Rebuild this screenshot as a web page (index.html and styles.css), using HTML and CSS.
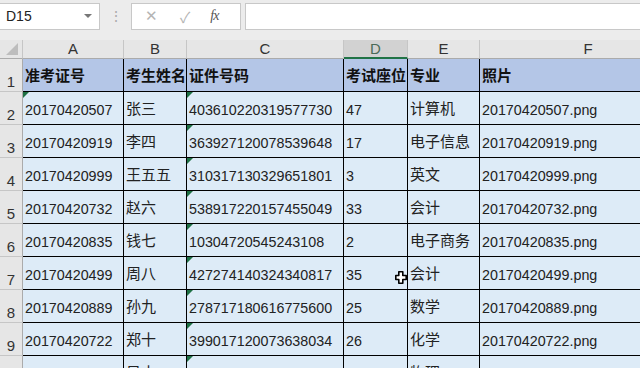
FILE: index.html
```html
<!DOCTYPE html>
<html lang="zh-CN">
<head>
    <meta charset="UTF-8">
    <title>考试信息表</title>
    <link rel="stylesheet" href="styles.css">
</head>
<body>
    <!-- formula bar -->
    <div class="formula-bar">
        <div class="name-box">
            <span>D15</span>
            <span class="drop-arrow"></span>
        </div>
        <div class="grip">⋮</div>
        <div class="fx-box">
            <span class="fx-cancel">✕</span>
            <span class="fx-ok">✓</span>
            <span class="fx-label">fx</span>
        </div>
        <div class="formula-input"></div>
    </div>

    <!-- worksheet -->
    <div class="sheet">
        <div class="corner"><span class="corner-mark"></span></div>
        <div class="col-head">A</div>
        <div class="col-head">B</div>
        <div class="col-head">C</div>
        <div class="col-head selected">D</div>
        <div class="col-head">E</div>
        <div class="col-head">F</div>

        <div class="row-head">1</div>
        <div class="cell title">准考证号</div>
        <div class="cell title">考生姓名</div>
        <div class="cell title">证件号码</div>
        <div class="cell title">考试座位</div>
        <div class="cell title">专业</div>
        <div class="cell title">照片</div>

        <div class="row-head">2</div>
        <div class="cell flag">20170420507</div>
        <div class="cell zh">张三</div>
        <div class="cell flag">403610220319577730</div>
        <div class="cell">47</div>
        <div class="cell zh">计算机</div>
        <div class="cell">20170420507.png</div>

        <div class="row-head">3</div>
        <div class="cell">20170420919</div>
        <div class="cell zh">李四</div>
        <div class="cell flag">363927120078539648</div>
        <div class="cell">17</div>
        <div class="cell zh">电子信息</div>
        <div class="cell">20170420919.png</div>

        <div class="row-head">4</div>
        <div class="cell">20170420999</div>
        <div class="cell zh">王五五</div>
        <div class="cell flag">310317130329651801</div>
        <div class="cell">3</div>
        <div class="cell zh">英文</div>
        <div class="cell">20170420999.png</div>

        <div class="row-head">5</div>
        <div class="cell">20170420732</div>
        <div class="cell zh">赵六</div>
        <div class="cell flag">538917220157455049</div>
        <div class="cell">33</div>
        <div class="cell zh">会计</div>
        <div class="cell">20170420732.png</div>

        <div class="row-head">6</div>
        <div class="cell">20170420835</div>
        <div class="cell zh">钱七</div>
        <div class="cell flag">10304720545243108</div>
        <div class="cell">2</div>
        <div class="cell zh">电子商务</div>
        <div class="cell">20170420835.png</div>

        <div class="row-head">7</div>
        <div class="cell">20170420499</div>
        <div class="cell zh">周八</div>
        <div class="cell flag">427274140324340817</div>
        <div class="cell">35</div>
        <div class="cell zh">会计</div>
        <div class="cell">20170420499.png</div>

        <div class="row-head">8</div>
        <div class="cell">20170420889</div>
        <div class="cell zh">孙九</div>
        <div class="cell flag">278717180616775600</div>
        <div class="cell">25</div>
        <div class="cell zh">数学</div>
        <div class="cell">20170420889.png</div>

        <div class="row-head">9</div>
        <div class="cell">20170420722</div>
        <div class="cell zh">郑十</div>
        <div class="cell flag">399017120073638034</div>
        <div class="cell">26</div>
        <div class="cell zh">化学</div>
        <div class="cell">20170420722.png</div>

        <div class="row-head">10</div>
        <div class="cell">20170420618</div>
        <div class="cell zh">吴十一</div>
        <div class="cell flag">420106199003127735</div>
        <div class="cell">12</div>
        <div class="cell zh">物理</div>
        <div class="cell">20170420618.png</div>
    </div>

    <!-- mouse cursor over the sheet -->
    <svg class="cursor" width="12" height="13" viewBox="0 0 12 13">
        <path d="M3.8 0.8h4v3.7h3.4v4h-3.4v3.7h-4v-3.7h-3v-4h3z" fill="#fff" stroke="#000" stroke-width="1.6" stroke-linejoin="round"/>
    </svg>
</body>
</html>
```

FILE: styles.css
```css
body {
    margin: 0;
    width: 640px;
    height: 368px;
    overflow: hidden;
    background: #e6e6e6;
    font-family: "Liberation Sans", "Noto Sans CJK SC", sans-serif;
    position: relative;
}

/* formula bar */
.formula-bar {
    display: flex;
    align-items: center;
    height: 40px;
    padding-bottom: 1px;
    box-sizing: border-box;
    background: #ececec;
}

.name-box {
    width: 100px;
    height: 27px;
    box-sizing: border-box;
    background: #fff;
    border: 1px solid #c8c8c8;
    border-left: none;
    display: flex;
    align-items: center;
    justify-content: space-between;
    padding: 0 7px 0 6px;
    font-size: 14px;
    color: #222;
    margin-top: -7px;
}

.drop-arrow {
    width: 0;
    height: 0;
    border-left: 4px solid transparent;
    border-right: 4px solid transparent;
    border-top: 4px solid #777;
}

.grip {
    width: 31px;
    text-align: center;
    color: #aaa;
    font-size: 14px;
    margin-top: -7px;
}

.fx-box {
    width: 110px;
    height: 27px;
    box-sizing: border-box;
    background: #fff;
    border: 1px solid #c8c8c8;
    display: flex;
    align-items: center;
    margin-top: -7px;
}

.fx-cancel {
    margin-left: 13px;
    color: #b4b4b4;
    font-size: 15px;
}

.fx-ok {
    margin-left: 22px;
    color: #b4b4b4;
    font-size: 15px;
}

.fx-label {
    margin-left: 20px;
    color: #555;
    font-family: "Liberation Serif", serif;
    font-style: italic;
    font-size: 14px;
    letter-spacing: -1px;
}

.formula-input {
    flex: 1;
    height: 27px;
    box-sizing: border-box;
    background: #fff;
    border: 1px solid #c8c8c8;
    border-right: none;
    margin-left: 4px;
    margin-top: -7px;
}

/* sheet grid */
.sheet {
    display: grid;
    grid-template-columns: 23px 101px 63px 157px 64px 72px 217px;
    grid-template-rows: 19px repeat(10, 33px);
    width: 697px;
}

.corner {
    background: #e6e6e6;
    border-right: 1px solid #c6c6c6;
    border-bottom: 1px solid #ababab;
    position: relative;
}

.corner-mark {
    position: absolute;
    right: 4px;
    bottom: 3px;
    width: 0;
    height: 0;
    border-left: 12px solid transparent;
    border-bottom: 12px solid #bdbdbd;
}

.col-head {
    background: #e6e6e6;
    border-right: 1px solid #c6c6c6;
    border-bottom: 1px solid #ababab;
    color: #333;
    font-size: 15px;
    text-align: center;
    line-height: 18px;
}

.col-head.selected {
    background: #d2d2d2;
    color: #4a6b58;
    border-bottom: 2px solid #217346;
    line-height: 17px;
}

.row-head {
    background: #e6e6e6;
    border-right: 1px solid #ababab;
    border-bottom: 1px solid #c6c6c6;
    color: #333;
    font-size: 15px;
    display: flex;
    align-items: flex-end;
    justify-content: center;
    padding-bottom: 1px;
    box-sizing: border-box;
}

.cell {
    background: #ddebf7;
    border-right: 1px solid #000;
    border-bottom: 1px solid #000;
    color: #222;
    font-size: 14.3px;
    display: flex;
    align-items: flex-end;
    padding: 0 0 6px 2px;
    box-sizing: border-box;
    white-space: nowrap;
    overflow: hidden;
    position: relative;
}

.cell.zh {
    font-size: 15px;
}

.cell.title {
    background: #b4c6e7;
    font-size: 15px;
    font-weight: 700;
    color: #111;
}

/* number stored as text marker */
.cell.flag::before {
    content: "";
    position: absolute;
    left: 0;
    top: 0;
    width: 0;
    height: 0;
    border-top: 6px solid #1e7145;
    border-right: 6px solid transparent;
}

.cursor {
    position: absolute;
    left: 395px;
    top: 271px;
}
```
